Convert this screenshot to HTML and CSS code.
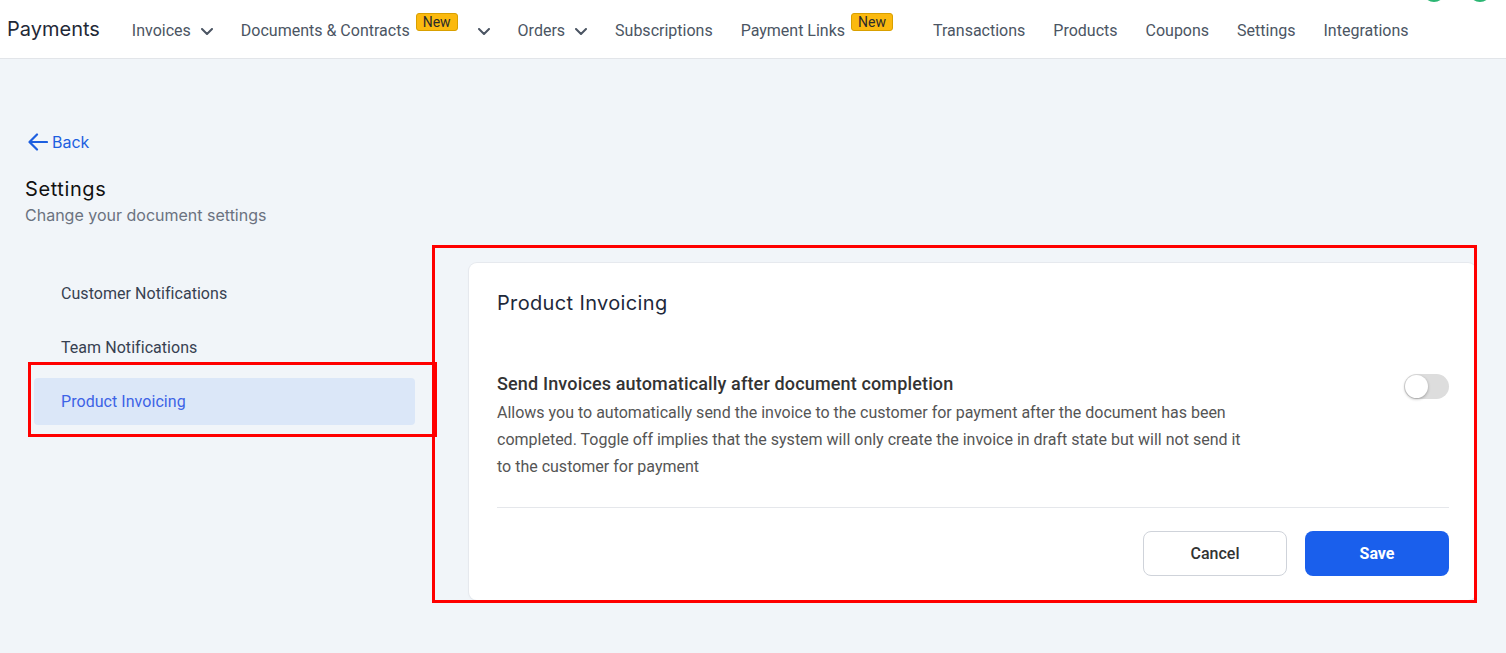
FILE: index.html
```html
<!DOCTYPE html>
<html>
<head>
<meta charset="utf-8">
<link rel="stylesheet" href="styles.css">
</head>
<body>
<header class="topbar">
  <div class="brand">Payments</div>
  <nav class="nav">
    <a class="nav-item">Invoices <svg class="chev" viewBox="0 0 12 7"><polyline points="1,1 6,6 11,1"/></svg></a>
    <a class="nav-item">Documents &amp; Contracts <span class="badge">New</span> <svg class="chev chev-far" viewBox="0 0 12 7"><polyline points="1,1 6,6 11,1"/></svg></a>
    <a class="nav-item">Orders <svg class="chev" viewBox="0 0 12 7"><polyline points="1,1 6,6 11,1"/></svg></a>
    <a class="nav-item">Subscriptions</a>
    <a class="nav-item nav-wide">Payment Links <span class="badge">New</span></a>
    <a class="nav-item">Transactions</a>
    <a class="nav-item">Products</a>
    <a class="nav-item">Coupons</a>
    <a class="nav-item">Settings</a>
    <a class="nav-item">Integrations</a>
  </nav>
  <div class="avatars"><span class="ring ring-a"></span><span class="ring ring-b"></span></div>
</header>

<main class="page">
  <a class="back"><svg class="back-icon" viewBox="0 0 20 18"><path d="M19 9H2M9 1.5L1.5 9L9 16.5"/></svg>Back</a>
  <h1 class="title">Settings</h1>
  <p class="subtitle">Change your document settings</p>

  <div class="layout">
    <aside class="sidebar">
      <a class="side-item">Customer Notifications</a>
      <a class="side-item">Team Notifications</a>
      <a class="side-item active">Product Invoicing</a>
    </aside>

    <section class="card">
      <h2 class="card-title">Product Invoicing</h2>
      <div class="setting">
        <div class="setting-text">
          <div class="setting-title">Send Invoices automatically after document completion</div>
          <p class="setting-desc">Allows you to automatically send the invoice to the customer for payment after the document has been completed. Toggle off implies that the system will only create the invoice in draft state but will not send it to the customer for payment</p>
        </div>
        <span class="toggle"><span class="knob"></span></span>
      </div>
      <div class="divider"></div>
      <div class="actions">
        <button class="btn btn-cancel">Cancel</button>
        <button class="btn btn-save">Save</button>
      </div>
    </section>
  </div>

  <div class="mark mark-side"></div>
  <div class="mark mark-card"></div>
</main>
</body>
</html>
```

FILE: styles.css
```css
* { box-sizing: border-box; }
html, body { margin: 0; padding: 0; }
body {
  background: #f1f5f9;
  font-family: Roboto, "Liberation Sans", sans-serif;
  color: #374151;
  position: relative;
  height: 653px;
  overflow: hidden;
}
a { text-decoration: none; cursor: pointer; }

.topbar {
  height: 59px;
  background: #ffffff;
  border-bottom: 1px solid #e2e5e9;
  display: flex;
  align-items: center;
  padding-left: 7px;
  position: relative;
}
.brand {
  font-family: Inter, "Liberation Sans", sans-serif;
  font-size: 20px;
  color: #1f2937;
  margin-right: 32px;
  padding-bottom: 1px;
}
.nav {
  display: flex;
  align-items: center;
  gap: 28px;
  padding-top: 4px;
}
.nav-item {
  display: flex;
  align-items: center;
  font-size: 16px;
  color: #4b5563;
  white-space: nowrap;
  line-height: 20px;
}
.nav-wide { padding-right: 12px; }
.chev {
  width: 12px;
  height: 7px;
  margin-left: 10px;
  fill: none;
  stroke: #4b5563;
  stroke-width: 2;
  stroke-linecap: round;
  stroke-linejoin: round;
}
.chev-far { margin-left: 20px; }
.badge {
  display: inline-block;
  margin-left: 6px;
  position: relative;
  top: -9px;
  background: #fbb90f;
  border: 1px solid #d9a000;
  border-radius: 3px;
  color: #2b2b2b;
  font-size: 14px;
  line-height: 16px;
  height: 18px;
  padding: 0 6px;
}
.avatars { position: absolute; top: 0; left: 0; }
.ring {
  position: absolute;
  top: -24px;
  width: 24px;
  height: 26px;
  border-radius: 50%;
  border: 2px solid #2bb673;
}
.ring-a { left: 1422px; }
.ring-b { left: 1468px; }

.page {
  padding: 71px 30px 0 25px;
}
.back {
  display: flex;
  align-items: center;
  color: #1d5fe0;
  font-family: Inter, "Liberation Sans", sans-serif;
  font-size: 16px;
  line-height: 24px;
  margin-left: 3px;
}
.back-icon {
  width: 20px;
  height: 18px;
  margin-right: 4px;
  fill: none;
  stroke: #1d5fe0;
  stroke-width: 2.2;
  stroke-linecap: round;
  stroke-linejoin: round;
}
.title {
  font-family: Inter, "Liberation Sans", sans-serif;
  font-size: 20px;
  font-weight: 400;
  line-height: 28px;
  letter-spacing: 0.6px;
  color: #111111;
  margin: 21px 0 0 0;
}
.subtitle {
  font-family: Inter, "Liberation Sans", sans-serif;
  font-size: 16px;
  line-height: 24px;
  color: #6b7280;
  margin: 0;
}

.layout {
  display: flex;
  margin-top: 36px;
}
.sidebar {
  width: 410px;
  flex: none;
  margin-right: 34px;
  padding-top: 7px;
  display: flex;
  flex-direction: column;
  gap: 7px;
}
.side-item {
  margin-left: 9px;
  width: 381px;
  height: 47px;
  display: flex;
  align-items: center;
  padding-left: 27px;
  font-size: 16px;
  letter-spacing: 0.05px;
  color: #374151;
  border-radius: 4px;
}
.side-item.active {
  background: #dbe7f8;
  color: #3d63e6;
}

.card {
  flex: 1;
  background: #ffffff;
  border-radius: 8px;
  box-shadow: 0 0 0 1px #e6e9ee, 0 1px 3px rgba(0,0,0,0.05);
  padding: 25px 27px 24px 28px;
}
.card-title {
  font-family: Inter, "Liberation Sans", sans-serif;
  font-size: 20px;
  font-weight: 400;
  line-height: 28px;
  letter-spacing: 0.35px;
  color: #1e293b;
  margin: 1px 0 0 0;
}
.setting {
  display: flex;
  justify-content: space-between;
  align-items: flex-start;
  margin-top: 55px;
}
.setting-title {
  font-size: 18px;
  font-weight: 500;
  line-height: 24px;
  letter-spacing: 0.15px;
  color: #333333;
  margin-bottom: 3px;
}
.setting-desc {
  font-size: 16px;
  line-height: 27px;
  color: #555555;
  margin: 0;
  max-width: 760px;
}
.toggle {
  width: 45px;
  height: 25px;
  border-radius: 13px;
  background: #dddddd;
  margin-top: 2px;
  position: relative;
  flex: none;
}
.knob {
  position: absolute;
  left: 1px;
  top: 1px;
  width: 23px;
  height: 23px;
  border-radius: 50%;
  background: #ffffff;
  box-shadow: 0 1px 3px rgba(0,0,0,0.3);
}
.divider {
  height: 1px;
  background: #e5e7eb;
  margin-top: 27px;
}
.actions {
  display: flex;
  justify-content: flex-end;
  gap: 18px;
  margin-top: 23px;
}
.btn {
  width: 144px;
  height: 45px;
  border-radius: 8px;
  font-family: Roboto, "Liberation Sans", sans-serif;
  font-size: 16px;
  font-weight: 500;
  cursor: pointer;
}
.btn-cancel {
  background: #ffffff;
  border: 1px solid #cfd3da;
  color: #333333;
}
.btn-save {
  background: #1a5fec;
  border: none;
  color: #ffffff;
  font-weight: 700;
}

.mark {
  position: absolute;
  border: 3px solid #ff0000;
  pointer-events: none;
}
.mark-side { left: 28px; top: 362px; width: 409px; height: 75px; }
.mark-card { left: 432px; top: 245px; width: 1045px; height: 358px; }
```
